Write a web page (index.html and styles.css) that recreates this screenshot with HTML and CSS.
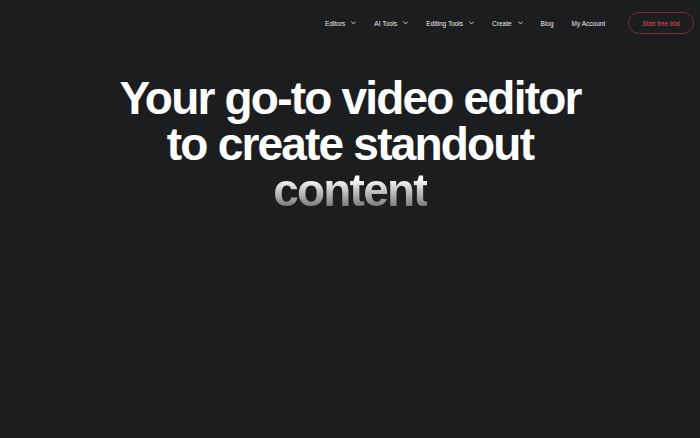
FILE: index.html
```html
<!DOCTYPE html>
<html lang="en">
<head>
    <meta charset="UTF-8">
    <meta name="viewport" content="width=device-width, initial-scale=1.0">
    <title>Video editor</title>
    <link rel="stylesheet" href="styles.css">
</head>
<body>
    <header class="header">
        <nav class="nav">
            <a class="nav-item" href="#"><span>Editors</span><svg class="chevron" viewBox="0 0 6 4"><path d="M0.8 0.8 L3 3 L5.2 0.8"/></svg></a>
            <a class="nav-item" href="#"><span>AI Tools</span><svg class="chevron" viewBox="0 0 6 4"><path d="M0.8 0.8 L3 3 L5.2 0.8"/></svg></a>
            <a class="nav-item" href="#"><span>Editing Tools</span><svg class="chevron" viewBox="0 0 6 4"><path d="M0.8 0.8 L3 3 L5.2 0.8"/></svg></a>
            <a class="nav-item" href="#"><span>Create</span><svg class="chevron" viewBox="0 0 6 4"><path d="M0.8 0.8 L3 3 L5.2 0.8"/></svg></a>
            <a class="nav-item" href="#"><span>Blog</span></a>
            <a class="nav-item account" href="#"><span>My Account</span></a>
            <a class="trial-btn" href="#">Start free trial</a>
        </nav>
    </header>

    <main class="hero">
        <h1 class="hero-title">Your go-to video editor<br>to create standout<br><span class="fade">content</span></h1>
    </main>
</body>
</html>
```

FILE: styles.css
```css
body {
    margin: 0;
    background: #1c1d1f;
    font-family: "Liberation Sans", Arial, sans-serif;
    color: #ffffff;
    height: 438px;
}

.header {
    height: 46px;
    display: flex;
    justify-content: flex-end;
    align-items: center;
    padding-right: 6px;
}

.nav {
    display: flex;
    align-items: center;
}

.nav-item {
    display: flex;
    align-items: center;
    gap: 6px;
    font-size: 6.5px;
    color: #ececec;
    text-decoration: none;
    margin-right: 18px;
}

.chevron {
    width: 5px;
    height: 4px;
    fill: none;
    stroke: #ececec;
    stroke-width: 1.1;
    stroke-linecap: round;
    stroke-linejoin: round;
}

.nav-item.account {
    margin-right: 23px;
}

.trial-btn {
    display: flex;
    align-items: center;
    height: 20px;
    padding: 0 13px;
    border: 1px solid #7c2c33;
    border-radius: 12px;
    font-size: 6.3px;
    color: #e5484f;
    text-decoration: none;
}

.hero {
    display: flex;
    justify-content: center;
}

.hero-title {
    margin: 29px 0 0;
    font-size: 46px;
    line-height: 46px;
    font-weight: 700;
    letter-spacing: -1.8px;
    text-align: center;
    color: #ffffff;
}

/* last line fades from white to grey */
.fade {
    background: linear-gradient(180deg, #ffffff 28%, #6a6a6a 88%);
    -webkit-background-clip: text;
    background-clip: text;
    color: transparent;
}
```
